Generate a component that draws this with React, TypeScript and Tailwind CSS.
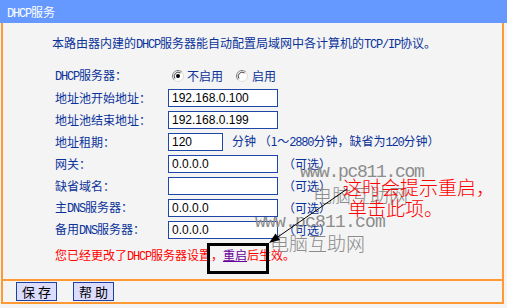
import React from "react";

function L({ children }: { children: React.ReactNode }) {
  return <span className="font-['Liberation_Mono',monospace] tracking-[-1.2px]">{children}</span>;
}

function Radio({ checked }: { checked?: boolean }) {
  return (
    <svg width="12" height="12" viewBox="0 0 12 12" className="shrink-0">
      <circle cx="6" cy="6" r="5.5" fill="#fff" />
      <path d="M2.1 9.9 A5.5 5.5 0 0 1 9.9 2.1" stroke="#808080" strokeWidth="1" fill="none" />
      <path d="M9.9 2.1 A5.5 5.5 0 0 1 2.1 9.9" stroke="#dcdcdc" strokeWidth="1" fill="none" />
      <path d="M3 8.6 A4 4 0 0 1 8.6 3" stroke="#404040" strokeWidth="1" fill="none" />
      {checked && <circle cx="6" cy="6" r="2" fill="#000" />}
    </svg>
  );
}

function Field({ value, w = "w-[110px]" }: { value?: string; w?: string }) {
  return (
    <div
      className={`${w} h-[18px] border border-[#1f47a8] bg-white pl-[3px] leading-[16px] font-['Liberation_Sans',sans-serif] text-[12px] text-black`}
    >
      {value}
    </div>
  );
}

function Row({ label, children }: { label: React.ReactNode; children: React.ReactNode }) {
  return (
    <div className="flex items-center h-[22px] leading-[22px]">
      <div className="w-[113px] shrink-0">{label}</div>
      {children}
    </div>
  );
}

const Opt = () => <span className="ml-[5px]">（可选）</span>;

export default function App() {
  return (
    <div className="relative w-[507px] h-[308px] bg-[#f4f4f4] overflow-hidden font-['Noto_Sans_CJK_SC',sans-serif] text-[12px]">
      <div className="h-[23px] bg-[#6699ff] text-white pl-[7px] leading-[23px]">
        <L>DHCP</L>服务
      </div>
      <div className="ml-[1px] w-[503px] border-x-2 border-b-2 border-[#ff9933]">
        <div className="h-[256px] pt-[12px] text-[#0a3299]">
          <div className="pl-[49px] h-[16px] leading-[16px] whitespace-nowrap">
            本路由器内建的<L>DHCP</L>服务器能自动配置局域网中各计算机的<L>TCP/IP</L>协议。
          </div>
          <div className="mt-[14px] pl-[52px]">
            <Row label={<><L>DHCP</L>服务器：</>}>
              <div className="flex items-center ml-[4px]">
                <Radio checked />
                <span className="ml-[3px]">不启用</span>
                <span className="ml-[13px] flex items-center">
                  <Radio />
                  <span className="ml-[4px]">启用</span>
                </span>
              </div>
            </Row>
            <Row label="地址池开始地址：">
              <Field value="192.168.0.100" />
            </Row>
            <Row label="地址池结束地址：">
              <Field value="192.168.0.199" />
            </Row>
            <Row label="地址租期：">
              <Field value="120" w="w-[55px]" />
              <span className="ml-[9px] whitespace-nowrap">
                分钟 （1～<L>2880</L>分钟，缺省为<L>120</L>分钟）
              </span>
            </Row>
            <Row label="网关：">
              <Field value="0.0.0.0" />
              <Opt />
            </Row>
            <Row label="缺省域名：">
              <Field />
              <Opt />
            </Row>
            <Row label={<>主<L>DNS</L>服务器：</>}>
              <Field value="0.0.0.0" />
              <Opt />
            </Row>
            <Row label={<>备用<L>DNS</L>服务器：</>}>
              <Field value="0.0.0.0" />
              <Opt />
            </Row>
          </div>
          <div className="mt-[3px] pl-[52px] h-[22px] leading-[22px] text-[#ff0000] whitespace-nowrap">
            您已经更改了<L>DHCP</L>服务器设置，
            <a className="underline text-[#660099] cursor-pointer">重启</a>
            后生效。
          </div>
        </div>
        <div className="border-t-2 border-[#ff9933] h-[23px] flex items-center pl-[13px] gap-[16px]">
          <button className="w-[41px] h-[19px] border border-[#2040a0] bg-[#dcdcfc] text-black text-[13px] leading-[17px]">
            保 存
          </button>
          <button className="w-[41px] h-[19px] border border-[#2040a0] bg-[#dcdcfc] text-black text-[13px] leading-[17px]">
            帮 助
          </button>
        </div>
      </div>

      {/* annotation box */}
      <div className="absolute left-[207px] top-[243px] w-[62px] h-[31px] border-[3px] border-black pointer-events-none" />

      {/* watermarks */}
      <div className="absolute left-[300px] top-[162px] text-[18px] leading-[20px] text-[#8c8c8c] font-['Liberation_Mono',monospace] tracking-[-1.3px] pointer-events-none">
        www.pc811.com
      </div>
      <div className="absolute left-[313px] top-[184px] text-[19px] leading-[22px] font-light text-[#8c8c8c] pointer-events-none">
        电脑互助网
      </div>
      <div className="absolute left-[255px] top-[212px] text-[18px] leading-[20px] text-[#8c8c8c] font-['Liberation_Mono',monospace] tracking-[-0.8px] pointer-events-none">
        www.pc811.com
      </div>
      <div className="absolute left-[270px] top-[232px] text-[19px] leading-[22px] font-light text-[#8c8c8c] pointer-events-none">
        电脑互助网
      </div>

      {/* red annotation */}
      <div className="absolute left-[343px] top-[176px] text-[19px] leading-[22px] font-light text-[#ff0000] whitespace-nowrap pointer-events-none">
        这时会提示重启，
      </div>
      <div className="absolute left-[348px] top-[197px] text-[19px] leading-[22px] font-light text-[#ff0000] whitespace-nowrap pointer-events-none">
        单击此项。
      </div>

      {/* arrow */}
      <svg className="absolute left-0 top-0 pointer-events-none" width="507" height="308">
        <line x1="347" y1="189" x2="272" y2="241" stroke="#000" strokeWidth="1" />
        <polygon points="269,243 275.5,233.5 280,240" fill="#000" />
      </svg>
    </div>
  );
}
